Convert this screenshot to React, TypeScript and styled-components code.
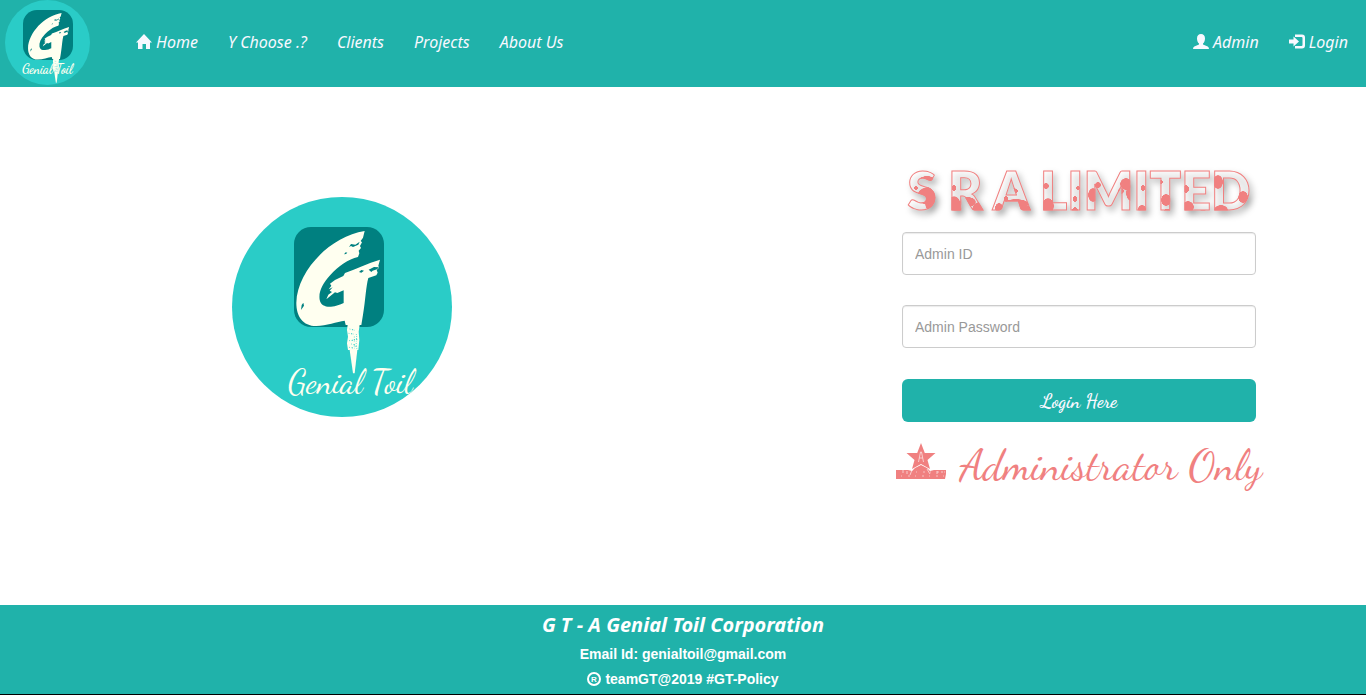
import React from "react";
import styled, { createGlobalStyle, css } from "styled-components";

const teal = "#20b2aa";
const coral = "#f08080";
const ivory = "#fffff0";
const scriptFont = `"Dancing Script", "Liberation Serif", serif`;
const navFont = `"Noto Sans", "Open Sans", sans-serif`;

const GlobalStyle = createGlobalStyle`
  *, *::before, *::after { box-sizing: border-box; }
  body {
    margin: 0;
    background: #fff;
    color: #333;
    font-family: "Liberation Sans", Arial, sans-serif;
    font-size: 14px;
    line-height: 20px;
  }
  h1, h2, p, ul { margin: 0; padding: 0; }
`;

const Page = styled.div`
  display: flex;
  flex-direction: column;
  min-height: 100vh;
`;

const Header = styled.header`
  display: flex;
  align-items: center;
  padding: 0 3px 2px 5px;
  background: ${teal};
`;

const HomeLink = styled.a`
  display: flex;
  margin-right: 31px;
`;

const LogoSvg = styled.svg<{ $size: number }>`
  display: block;
  width: ${(p) => p.$size}px;
  height: ${(p) => p.$size}px;
`;

const Nav = styled.nav`
  display: flex;
  flex: 1;
  justify-content: space-between;
`;

const NavList = styled.ul`
  display: flex;
  list-style: none;
`;

const NavLink = styled.a`
  display: flex;
  align-items: center;
  gap: 4px;
  padding: 9px 15px 11px;
  color: #f8f8ff;
  font: italic 16px/20px ${navFont};
  text-decoration: none;
  white-space: nowrap;
`;

const NavIcon = styled.svg`
  width: 16px;
  height: 16px;
  fill: currentColor;
`;

const Main = styled.main`
  display: grid;
  grid-template-columns: 1fr 1fr;
  flex: 1;
`;

const Brand = styled.section`
  display: flex;
  justify-content: center;
  align-items: flex-start;
  padding-top: 110px;
`;

const Access = styled.section`
  display: flex;
  justify-content: flex-end;
  padding: 71px 110px 71px 0;
`;

const LoginForm = styled.form`
  display: flex;
  flex-direction: column;
  width: 354px;
  max-width: 100%;
`;

const blot = (x: number, y: number, rx: number, ry: number) =>
  `radial-gradient(${rx}px ${ry}px at ${x}px ${y}px, ${coral} 92%, transparent)`;

const blots = [
  blot(26, 38, 11, 9),
  blot(31, 46, 8, 8),
  blot(25, 22, 8, 4),
  blot(30, 29, 4, 3),
  blot(14, 30, 2, 2),
  blot(52, 48, 7, 10),
  blot(57, 54, 6, 5),
  blot(66, 44, 8, 5),
  blot(77, 52, 7, 8),
  blot(52, 30, 2, 3),
  blot(97, 50, 4, 5),
  blot(114, 46, 13, 5),
  blot(111, 33, 5, 3),
  blot(123, 52, 6, 5),
  blot(104, 41, 2, 3),
  blot(146, 48, 6, 8),
  blot(156, 56, 7, 3),
  blot(144, 28, 3, 3),
  blot(173, 53, 3, 4),
  blot(176, 30, 2, 2),
  blot(173, 41, 2, 3),
  blot(191, 37, 5, 7),
  blot(196, 27, 3, 3),
  blot(224, 26, 6, 6),
  blot(229, 35, 5, 8),
  blot(219, 33, 3, 3),
  blot(240, 51, 4, 4),
  blot(241, 30, 2, 3),
  blot(264, 42, 5, 6),
  blot(265, 54, 4, 3),
  blot(258, 24, 3, 2),
  blot(286, 49, 6, 6),
  blot(284, 31, 3, 4),
  blot(298, 40, 5, 3),
  blot(301, 55, 5, 3),
  blot(316, 24, 5, 7),
  blot(319, 52, 7, 5),
  blot(328, 55, 4, 2),
  blot(341, 39, 5, 6),
  "linear-gradient(rgba(255, 255, 255, 0.5), rgba(255, 255, 255, 0.5))",
].join(", ");

const Title = styled.h1`
  padding-bottom: 10px;
  color: transparent;
  background: ${blots};
  -webkit-background-clip: text;
  background-clip: text;
  -webkit-text-stroke: 1px ${coral};
  filter: drop-shadow(3px 4px 3px rgba(0, 0, 0, 0.35));
  font: 800 52px/64px Lato, sans-serif;
  text-align: center;
  white-space: nowrap;
`;

const control = css`
  width: 100%;
  height: 43px;
  border-radius: 4px;
`;

const Field = styled.input`
  ${control}
  margin-bottom: 30px;
  padding: 6px 12px;
  border: 1px solid #ccc;
  box-shadow: inset 0 1px 1px rgba(0, 0, 0, 0.08);
  background: #fff;
  color: #555;
  font: 14px/20px "Liberation Sans", Arial, sans-serif;
  &::placeholder { color: #999; opacity: 1; }
`;

const LoginButton = styled.button`
  ${control}
  margin-top: 1px;
  border: 0;
  border-radius: 6px;
  background: ${teal};
  color: #f8f8ff;
  font: bold 19px/24px ${scriptFont};
  cursor: pointer;
`;

const Notice = styled.h2`
  display: flex;
  align-items: flex-start;
  justify-content: center;
  gap: 14px;
  padding-top: 21px;
  color: ${coral};
  font: 43px/44px ${scriptFont};
  white-space: nowrap;
`;

const StarIcon = styled.svg`
  flex: none;
  width: 50px;
  height: 38px;
`;

const Footer = styled.footer`
  display: flex;
  flex-direction: column;
  align-items: center;
  gap: 5px;
  padding: 7px 15px 5px;
  border-bottom: 1px solid #000;
  background: ${teal};
  color: #fff;
`;

const Company = styled.p`
  padding-bottom: 2px;
  font: italic bold 20px/25px ${navFont};
`;

const FooterLine = styled.p`
  display: flex;
  align-items: center;
  gap: 4px;
  font-size: 14px;
  font-weight: bold;
`;

const MarkIcon = styled.svg`
  width: 14px;
  height: 14px;
`;

/* Brush-painted monogram that runs down into a pen nib. */
const BrushMark = () => (
  <>
    <path
      fill={ivory}
      d="M419 123L414 143L407 153L411 157L405 168L408 174L401 182L403 190L399 201C370 207 340 229 316 255C293 280 280 305 284 329C287 345 300 351 318 350C333 349 345 344 356 339V301L337 309L330 307L304 328L310 314L321 306L314 302L323 292L311 298L319 287L315 281L330 270L355 258L360 249C395 237 427 220 465 209L460 227L462 233L455 240L458 248L454 256L430 264C423 288 421 334 414 374L409 405H362L359 392C336 395 304 407 274 408C234 408 214 379 214 338C216 245 314 139 419 123Z"
    />
    <path
      fill="#008080"
      d="M372 171L378 162L391 164L404 155L400 164L384 171L378 168ZM357 193L362 187L367 188L363 192ZM402 246L409 240L417 242L409 248ZM431 239L447 231L462 232L456 238L443 242L439 246ZM228 360L230 345L235 338L237 347Z"
    />
    <path fill={ivory} d="M368 404H404L401 425L403 450L400 480H369L366 460L369 440L366 420Z" />
    <path
      fill="none"
      stroke="#2accc7"
      strokeWidth="3"
      strokeDasharray="2 5 4 4 1 6"
      d="M374 417L394 422M371 430L397 434M388 440V470M373 452L397 449M379 462L394 467M373 472L397 476M395 438L393 473"
    />
    <path fill={ivory} d="M374 480H397L389 550H384Z" />
  </>
);

const LargeLogo = () => (
  <LogoSvg $size={220} viewBox="0 0 220 220" role="img" aria-label="Genial Toil">
    <clipPath id="disc"><circle cx="110" cy="110" r="110" /></clipPath>
    <circle cx="110" cy="110" r="110" fill="#2accc7" />
    <rect x="62" y="30" width="90" height="100" rx="17" fill="#008080" />
    <g transform="translate(-7 -7) scale(0.33333)"><BrushMark /></g>
    <g clipPath="url(#disc)">
      <text x="56" y="196" fill={ivory} fontFamily={scriptFont} fontSize="33">
        Genial Toil
      </text>
    </g>
  </LogoSvg>
);

const SmallLogo = () => (
  <LogoSvg $size={85} viewBox="0 0 85 85" role="img" aria-label="Genial Toil">
    <circle cx="42.5" cy="42.5" r="42.5" fill="#2accc7" />
    <rect x="18" y="10" width="50" height="50" rx="14" fill="#008080" />
    <g transform="translate(-12 -7.2) scale(0.1637)"><BrushMark /></g>
    <text x="17" y="73" fill={ivory} fontFamily={scriptFont} fontWeight="bold" fontSize="13">
      Genial Toil
    </text>
  </LogoSvg>
);

const HomeIcon = () => (
  <NavIcon viewBox="0 0 16 16" aria-hidden="true">
    <path d="M8 0L16 8.5H14V15H10V10H6.500V15H2V8.500H0Z" />
  </NavIcon>
);

const UserIcon = () => (
  <NavIcon viewBox="0 0 16 16" aria-hidden="true">
    <path d="M8 0C10.500 0 12 1.700 12 4.500C12 6.800 11.200 8.600 10 9.600V10.500L14.700 12.500Q16 13.200 16 15H0Q0 13.200 1.300 12.500L6 10.500V9.600C4.800 8.600 4 6.800 4 4.500C4 1.700 5.500 0 8 0Z" />
  </NavIcon>
);

const LoginIcon = () => (
  <NavIcon viewBox="0 0 16 16" aria-hidden="true">
    <path d="M6 0.500H13Q16 0.500 16 3.500V11.500Q16 14.500 13 14.500H6V12H12.500Q13.500 12 13.500 11V4Q13.500 3 12.500 3H6ZM4.500 2.500L10 7.500L4.500 12.500V9.500H0V5.500H4.500Z" />
  </NavIcon>
);

const BannerStar = () => (
  <StarIcon viewBox="0 0 50 38" aria-hidden="true">
    <path fill={coral} d="M25 0L28.800 10H39.500L31.500 17L34 26L25 21L16 26L18.500 17L10.500 10H21.200Z" />
    <path fill={coral} d="M0 27H12L16 28L19 25L25 22L31 25L34 28L38 27H50V31L49 36H0Z" />
    <path fill="none" stroke="#fff" strokeWidth="1" opacity="0.6" d="M22.500 19L24.500 9H25.500L27.500 19M23.500 15H26.500M7 27V30M11 28V31M16 27L14 32M31 26L34 31M41 28V31M45 29H47" />
    <path fill="none" stroke="#fff" strokeWidth="1" strokeDasharray="1 6 2 5" opacity="0.5" d="M5 33H49M20 29H49" />
  </StarIcon>
);

const RegisteredIcon = () => (
  <MarkIcon viewBox="0 0 14 14" aria-hidden="true">
    <circle cx="7" cy="7" r="6" fill="none" stroke="#fff" strokeWidth="2" />
    <text x="7" y="10" fill="#fff" fontSize="8" textAnchor="middle">R</text>
  </MarkIcon>
);

export default function App() {
  return (
    <>
      <GlobalStyle />
      <Page>
        <Header>
          <HomeLink href="#"><SmallLogo /></HomeLink>
          <Nav>
            <NavList>
              <li><NavLink href="#home"><HomeIcon />Home</NavLink></li>
              <li><NavLink href="#choose">Y Choose .?</NavLink></li>
              <li><NavLink href="#clients">Clients</NavLink></li>
              <li><NavLink href="#projects">Projects</NavLink></li>
              <li><NavLink href="#about">About Us</NavLink></li>
            </NavList>
            <NavList>
              <li><NavLink href="#admin"><UserIcon />Admin</NavLink></li>
              <li><NavLink href="#login"><LoginIcon />Login</NavLink></li>
            </NavList>
          </Nav>
        </Header>
        <Main>
          <Brand><LargeLogo /></Brand>
          <Access>
            <LoginForm onSubmit={(e) => e.preventDefault()}>
              <Title>S R A LIMITED</Title>
              <Field type="text" placeholder="Admin ID" aria-label="Admin ID" />
              <Field type="password" placeholder="Admin Password" aria-label="Admin Password" />
              <LoginButton type="submit">Login Here</LoginButton>
              <Notice><BannerStar />Administrator Only</Notice>
            </LoginForm>
          </Access>
        </Main>
        <Footer>
          <Company>G T - A Genial Toil Corporation</Company>
          <FooterLine>Email Id: genialtoil@gmail.com</FooterLine>
          <FooterLine><RegisteredIcon />teamGT@2019 #GT-Policy</FooterLine>
        </Footer>
      </Page>
    </>
  );
}
